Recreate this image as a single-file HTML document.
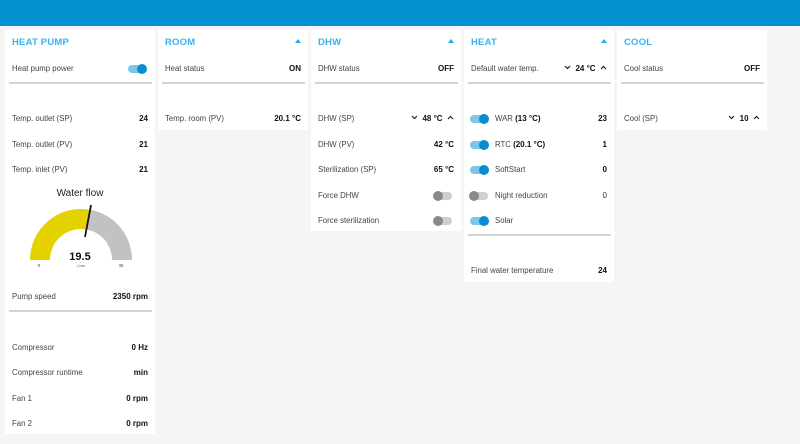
<!DOCTYPE html>
<html><head><meta charset="utf-8"><style>
*{margin:0;padding:0;box-sizing:border-box}
body{width:800px;height:444px;background:#f5f5f5;font-family:"Liberation Sans",sans-serif;position:relative;overflow:hidden;color:#333}
.top{position:absolute;left:0;top:0;width:800px;height:26px;background:#0590cf}
.card{position:absolute;top:30px;width:150px;background:#fff}
.t{position:absolute;left:7px;top:7px;font-size:9.5px;font-weight:bold;color:#3db1ee;letter-spacing:.2px}
.car{position:absolute;right:7px;top:9px;width:0;height:0;border-left:3px solid transparent;border-right:3px solid transparent;border-bottom:4px solid #2aa6ea}
.r{position:absolute;left:7px;right:7px;height:16px;line-height:16px;font-size:7.8px;color:#444}
.r b{position:absolute;right:0;top:0;color:#111;font-size:8px}
.r b.n{font-weight:normal;color:#333}
.d{position:absolute;left:4px;right:3px;height:2px;background:#d3d3d3}
.tg{position:absolute;width:18px;height:8px;border-radius:4px;background:#7cc6ea}
.tg:after{content:"";position:absolute;right:-1px;top:-1px;width:10px;height:10px;border-radius:50%;background:#0a8ccf}
.tg.off{background:#cfcfcf}
.tg.off:after{left:-1px;right:auto;background:#8a8a8a}
svg.c{display:inline-block;vertical-align:middle;margin-top:-2px}
</style></head><body>
<div class="top"></div>

<div class="card" style="left:5px;height:404px">
<div class="t">HEAT PUMP</div>
<div class="r" style="top:31px">Heat pump power</div>
<div class="tg" style="right:9px;top:35px"></div>
<div class="d" style="top:52px"></div>
<div class="r" style="top:81px">Temp. outlet (SP)<b>24</b></div>
<div class="r" style="top:107px">Temp. outlet (PV)<b>21</b></div>
<div class="r" style="top:132px">Temp. inlet (PV)<b>21</b></div>
<svg style="position:absolute;left:0;top:150px" width="150" height="95" viewBox="5 180 150 95">
<text x="80" y="196" font-size="10" text-anchor="middle" fill="#222" font-family="Liberation Sans">Water flow</text>
<path d="M30 260 A51 51 0 0 1 90.1 209.8 L86.6 229.5 A31 31 0 0 0 50 260 Z" fill="#e3d200"/>
<path d="M90.1 209.8 A51 51 0 0 1 132 260 L112 260 A31 31 0 0 0 86.6 229.5 Z" fill="#c2c2c2"/>
<line x1="85" y1="237" x2="91" y2="205" stroke="#111" stroke-width="1.8"/>
<text x="80" y="260" font-size="11" font-weight="bold" text-anchor="middle" fill="#111" font-family="Liberation Sans">19.5</text>
<text x="81" y="267" font-size="3.5" text-anchor="middle" fill="#666" font-family="Liberation Sans">L/min</text>
<text x="39" y="267" font-size="4.5" text-anchor="middle" fill="#444" font-family="Liberation Sans">0</text>
<text x="121" y="267" font-size="4.5" text-anchor="middle" fill="#444" font-family="Liberation Sans">35</text>
</svg>
<div class="r" style="top:259px">Pump speed<b>2350 rpm</b></div>
<div class="d" style="top:280px"></div>
<div class="r" style="top:310px">Compressor<b>0 Hz</b></div>
<div class="r" style="top:335px">Compressor runtime<b>min</b></div>
<div class="r" style="top:361px">Fan 1<b>0 rpm</b></div>
<div class="r" style="top:386px">Fan 2<b>0 rpm</b></div>
</div>

<div class="card" style="left:158px;height:100px">
<div class="t">ROOM</div><div class="car"></div>
<div class="r" style="top:31px">Heat status<b>ON</b></div>
<div class="d" style="top:52px"></div>
<div class="r" style="top:81px">Temp. room (PV)<b>20.1 °C</b></div>
</div>

<div class="card" style="left:311px;height:201px">
<div class="t">DHW</div><div class="car"></div>
<div class="r" style="top:31px">DHW status<b>OFF</b></div>
<div class="d" style="top:52px"></div>
<div class="r" style="top:81px">DHW (SP)<b><svg class="c" width="7" height="5"><path d="M1 1L3.5 3.5L6 1" stroke="#222" stroke-width="1.2" fill="none"/></svg>&nbsp;&nbsp;48 °C&nbsp;&nbsp;<svg class="c" width="7" height="5"><path d="M1 4L3.5 1.5L6 4" stroke="#222" stroke-width="1.2" fill="none"/></svg></b></div>
<div class="r" style="top:107px">DHW (PV)<b>42 °C</b></div>
<div class="r" style="top:132px">Sterilization (SP)<b>65 °C</b></div>
<div class="r" style="top:158px">Force DHW</div>
<div class="tg off" style="right:9px;top:162px"></div>
<div class="r" style="top:183px">Force sterilization</div>
<div class="tg off" style="right:9px;top:187px"></div>
</div>

<div class="card" style="left:464px;height:252px">
<div class="t">HEAT</div><div class="car"></div>
<div class="r" style="top:31px">Default water temp.<b><svg class="c" width="7" height="5"><path d="M1 1L3.5 3.5L6 1" stroke="#222" stroke-width="1.2" fill="none"/></svg>&nbsp;&nbsp;24 °C&nbsp;&nbsp;<svg class="c" width="7" height="5"><path d="M1 4L3.5 1.5L6 4" stroke="#222" stroke-width="1.2" fill="none"/></svg></b></div>
<div class="d" style="top:52px"></div>
<div class="tg" style="left:6px;top:85px"></div><div class="r" style="top:81px;left:31px">WAR <b style="position:static">(13 °C)</b><b>23</b></div>
<div class="tg" style="left:6px;top:111px"></div><div class="r" style="top:107px;left:31px">RTC <b style="position:static">(20.1 °C)</b><b>1</b></div>
<div class="tg" style="left:6px;top:136px"></div><div class="r" style="top:132px;left:31px">SoftStart<b>0</b></div>
<div class="tg off" style="left:6px;top:162px"></div><div class="r" style="top:158px;left:31px">Night reduction<b class="n">0</b></div>
<div class="tg" style="left:6px;top:187px"></div><div class="r" style="top:183px;left:31px">Solar</div>
<div class="d" style="top:204px"></div>
<div class="r" style="top:233px">Final water temperature<b>24</b></div>
</div>

<div class="card" style="left:617px;height:100px">
<div class="t">COOL</div>
<div class="r" style="top:31px">Cool status<b>OFF</b></div>
<div class="d" style="top:52px"></div>
<div class="r" style="top:81px">Cool (SP)<b><svg class="c" width="7" height="5"><path d="M1 1L3.5 3.5L6 1" stroke="#222" stroke-width="1.2" fill="none"/></svg>&nbsp;&nbsp;10&nbsp;&nbsp;<svg class="c" width="7" height="5"><path d="M1 4L3.5 1.5L6 4" stroke="#222" stroke-width="1.2" fill="none"/></svg></b></div>
</div>
</body></html>
